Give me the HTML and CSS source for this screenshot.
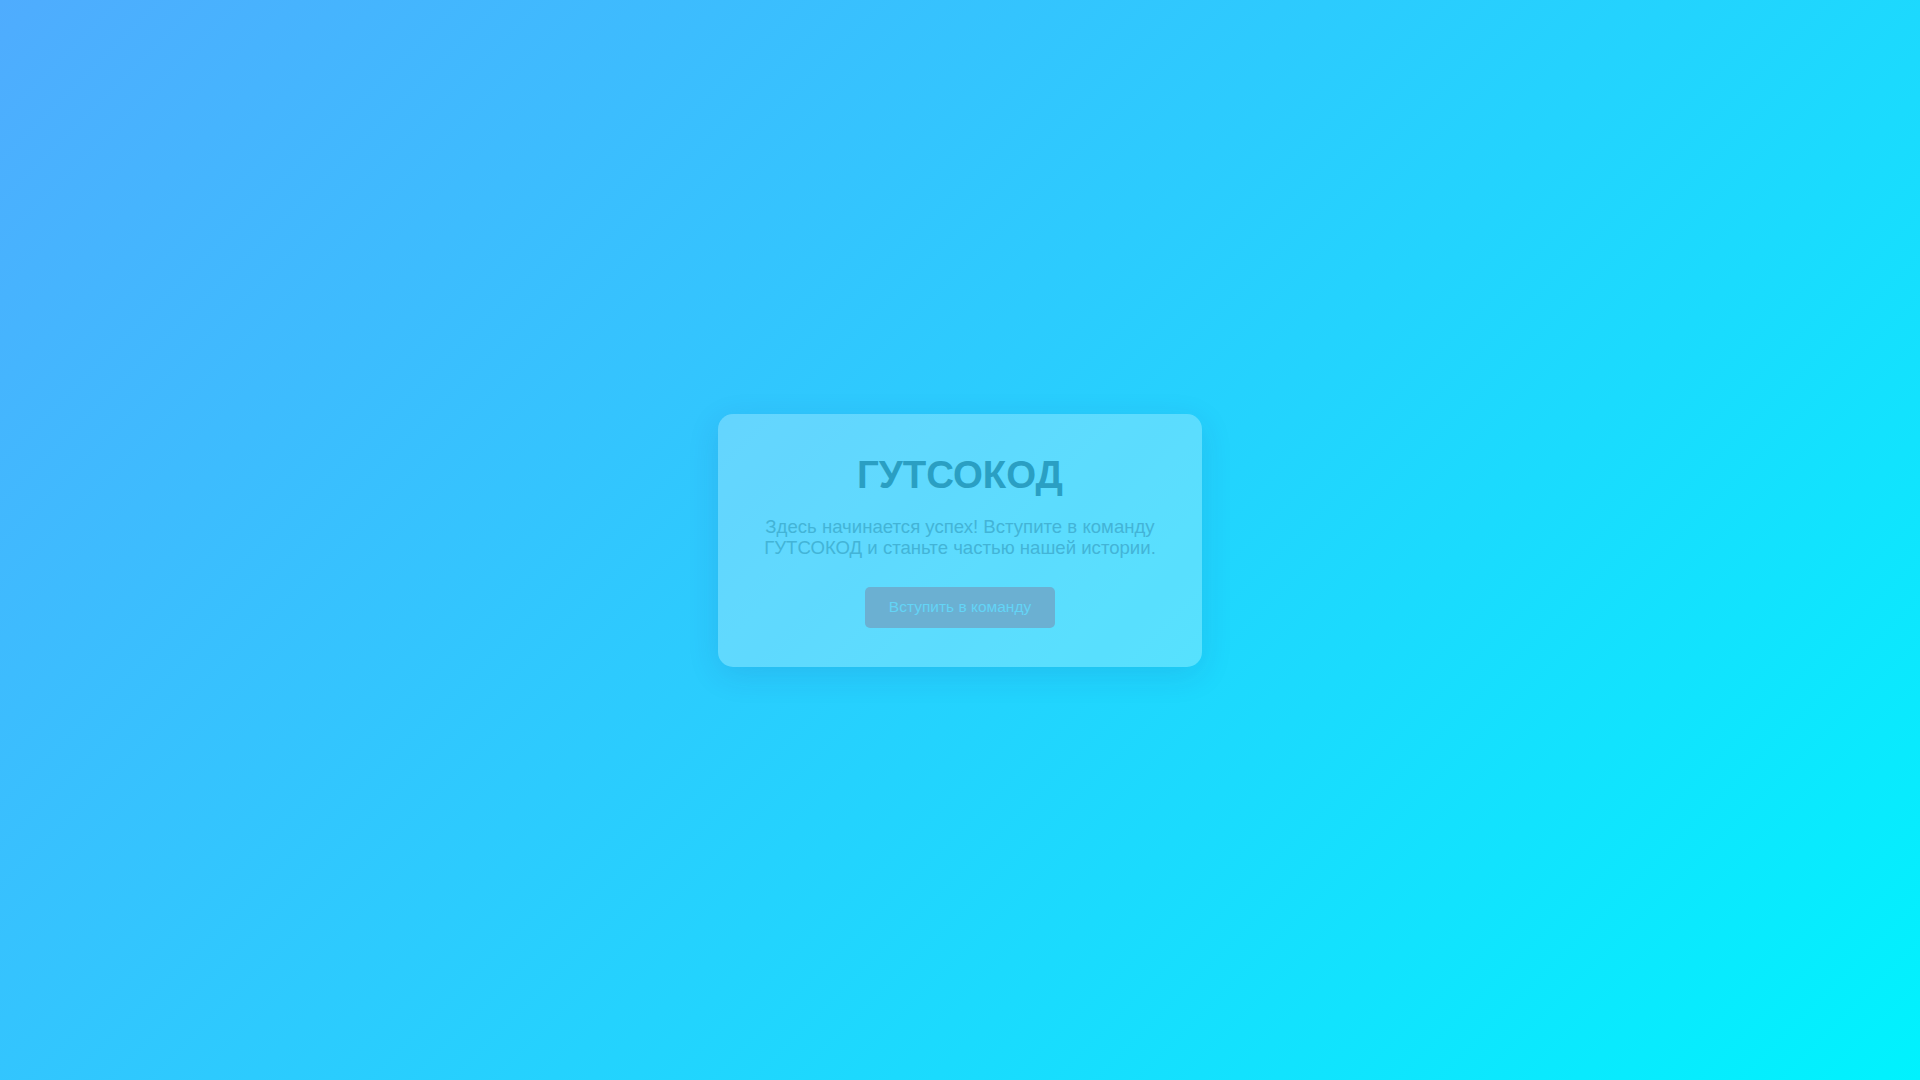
FILE: index.html
```html
<!DOCTYPE html>
<html lang="ru">
<head>
<meta charset="utf-8">
<title>ГУТСОКОД</title>
<link rel="stylesheet" href="styles.css">
</head>
<body>
<main class="page">
  <section class="card">
    <h1 class="title">ГУТСОКОД</h1>
    <p class="lead">Здесь начинается успех! Вступите в команду ГУТСОКОД и станьте частью нашей истории.</p>
    <button class="join" type="button">Вступить в команду</button>
  </section>
</main>
</body>
</html>
```

FILE: styles.css
```css
html, body {
  margin: 0;
  height: 100%;
}
body {
  font-family: "Liberation Sans", Arial, sans-serif;
  background: linear-gradient(135deg, #4facfe 0%, #00f2fe 100%);
}
.page {
  height: 100%;
  display: flex;
  align-items: center;
  justify-content: center;
}
.card {
  box-sizing: border-box;
  width: 484px;
  padding: 39px 40px 39px;
  border-radius: 15px;
  background: rgba(255, 255, 255, 0.25);
  box-shadow: 0 8px 32px rgba(31, 38, 135, 0.12);
  text-align: center;
  display: flex;
  flex-direction: column;
  align-items: center;
}
.title {
  margin: 0 0 19px;
  font-size: 38.4px;
  font-weight: bold;
  color: #2a9fc3;
  line-height: 44px;
}
.lead {
  margin: 0 0 29px;
  font-size: 18.6px;
  line-height: 21px;
  color: #43b4d7;
}
.join {
  font-family: inherit;
  font-size: 15.5px;
  width: 190px;
  height: 41px;
  border: none;
  border-radius: 5px;
  background: #6bb0d2;
  color: #63d4f6;
  cursor: pointer;
}
```
